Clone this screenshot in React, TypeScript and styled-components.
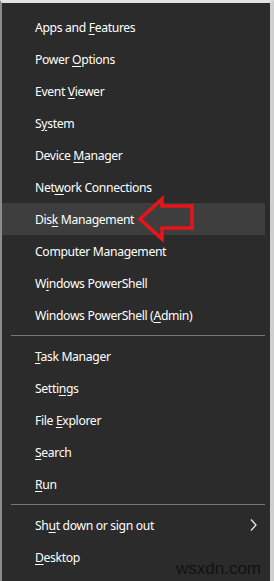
import React from 'react';
import styled, {createGlobalStyle} from 'styled-components';

const GlobalStyle = createGlobalStyle`
  html, body {
    margin: 0;
    padding: 0;
    background: #d6d6d6;
  }
`;

type Item = {label: string; key: number; submenu?: boolean; active?: boolean};

const groups: Item[][] = [
  [
    {label: 'Apps and Features', key: 9},
    {label: 'Power Options', key: 6},
    {label: 'Event Viewer', key: 6},
    {label: 'System', key: 1},
    {label: 'Device Manager', key: 7},
    {label: 'Network Connections', key: 3},
    {label: 'Disk Management', key: 3, active: true},
    {label: 'Computer Management', key: 13},
    {label: 'Windows PowerShell', key: 1},
    {label: 'Windows PowerShell (Admin)', key: 20},
  ],
  [
    {label: 'Task Manager', key: 0},
    {label: 'Settings', key: 5},
    {label: 'File Explorer', key: 5},
    {label: 'Search', key: 0},
    {label: 'Run', key: 0},
  ],
  [
    {label: 'Shut down or sign out', key: 2, submenu: true},
    {label: 'Desktop', key: 0},
  ],
];

const App: React.FC = () => {
  return (
    <>
      <GlobalStyle />
      <Menu>
        {groups.map((group, gi) => (
          <React.Fragment key={gi}>
            {gi > 0 && <Separator />}
            {group.map((item) => (
              <Row key={item.label} $active={item.active}>
                <Label>
                  {item.label.slice(0, item.key)}
                  <u>{item.label[item.key]}</u>
                  {item.label.slice(item.key + 1)}
                </Label>
                {item.submenu && (
                  <Chevron width="7" height="14" viewBox="0 0 7 14">
                    <polyline points="1,1.5 6,7 1,12.5" />
                  </Chevron>
                )}
                {item.active && (
                  <Arrow width="62" height="50" viewBox="0 0 62 50">
                    <polygon points="5,25 27,5 27,12 57,12 57,34 27,34 27,45" />
                  </Arrow>
                )}
              </Row>
            ))}
          </React.Fragment>
        ))}
        <Watermark>wsxdn.com</Watermark>
      </Menu>
    </>
  );
};

const Menu = styled.div`
  position: relative;
  box-sizing: border-box;
  width: 274px;
  height: 581px;
  margin: 0;
  padding: 8px 5px 0 0;
  background: #2b2b2b;
  border-top: 3px solid #e2e2e2;
  border-left: 2px solid #8c8c8c;
  border-right: 4px solid #cfcfcf;
  font-family: 'Noto Sans', 'Liberation Sans', sans-serif;
  font-size: 12.2px;
  color: #ffffff;
`;

const Row = styled.div<{$active?: boolean}>`
  position: relative;
  display: flex;
  align-items: center;
  height: 32px;
  padding-left: 33px;
  padding-right: 8px;
  background: ${(p) => (p.$active ? '#3e3e3e' : 'transparent')};
`;

const Label = styled.span`
  flex: 1;
  white-space: nowrap;
  letter-spacing: -0.35px;

  u {
    text-underline-offset: 2px;
  }
`;

const Separator = styled.div`
  height: 9px;
  display: flex;
  align-items: center;
  padding-left: 9px;

  &::after {
    content: '';
    flex: 1;
    height: 1px;
    background: #7a7a7a;
  }
`;

const Chevron = styled.svg`
  fill: none;
  stroke: #e8e8e8;
  stroke-width: 1.3;
`;

const Arrow = styled.svg`
  position: absolute;
  left: 133px;
  top: -9px;
  fill: none;
  stroke: #e8141a;
  stroke-width: 3.5;
  stroke-linejoin: miter;
`;

const Watermark = styled.div`
  position: absolute;
  right: 9px;
  bottom: 2px;
  font-family: 'Liberation Sans', Arial, sans-serif;
  font-size: 17px;
  color: #121212;
`;

export default App;
